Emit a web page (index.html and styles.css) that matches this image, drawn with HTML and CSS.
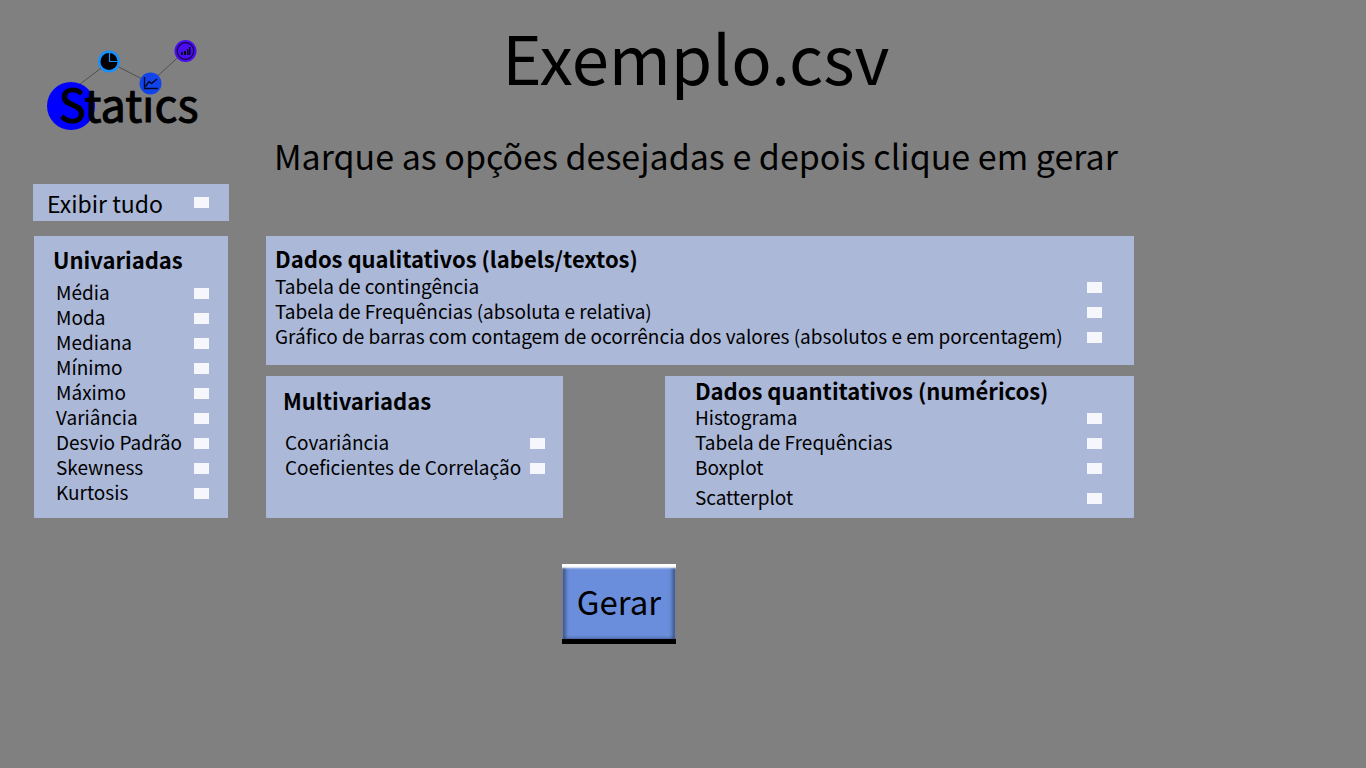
FILE: index.html
```html
<!DOCTYPE html>
<html lang="pt-BR">
<head>
<meta charset="utf-8">
<title>Statics - Exemplo.csv</title>
<meta name="viewport" content="width=device-width, initial-scale=1">
<link rel="stylesheet" href="styles.css">
</head>
<body>
<form class="page">
  <header class="header">
    <svg class="logo" viewBox="0 0 176 100" role="img" aria-label="Statics">
      <path d="M38 57 L76 28 L117 49 L152 17" fill="none" stroke="#505050" stroke-width="1"/>
      <circle cx="38" cy="72" r="24" fill="#0000ff"/>
      <text class="logo-text" x="26" y="88">Statics</text>
      <circle cx="76" cy="27.500" r="11" fill="#1590ff"/>
      <circle cx="76" cy="27.500" r="8.500" fill="#000"/>
      <path d="M76.500 19 V27.500 H84.500" fill="none" stroke="#1590ff" stroke-width="1.200"/>
      <circle cx="117.500" cy="49.500" r="11" fill="#1244ec"/>
      <path d="M111.500 43 V54.500 H125 M112.500 52.500 L116 47.500 L118.500 49.500 L124 45" fill="none" stroke="#020820" stroke-width="1.400"/>
      <circle cx="152.500" cy="17" r="11" fill="#4a0cf0"/>
      <circle cx="152.500" cy="17" r="8.300" fill="none" stroke="#10023c" stroke-width="1.200"/>
      <path d="M148 18 h2 v3 h-2 Z M151 17 h2 v4 h-2 Z M154 15 h1.500 v6 h-1.500 Z M156 13 h1.500 v8 h-1.500 Z" fill="#080018"/>
    </svg>
    <div class="intro">
      <h1 class="title">Exemplo.csv</h1>
      <p class="subtitle">Marque as opções desejadas e depois clique em gerar</p>
    </div>
  </header>
  <main class="content">
    <div class="sidebar">
      <label class="all">Exibir tudo<input class="check" type="checkbox"></label>
      <section class="panel univariate">
        <h2 class="heading">Univariadas</h2>
        <label class="option">Média<input class="check" type="checkbox"></label>
        <label class="option">Moda<input class="check" type="checkbox"></label>
        <label class="option">Mediana<input class="check" type="checkbox"></label>
        <label class="option">Mínimo<input class="check" type="checkbox"></label>
        <label class="option">Máximo<input class="check" type="checkbox"></label>
        <label class="option">Variância<input class="check" type="checkbox"></label>
        <label class="option">Desvio Padrão<input class="check" type="checkbox"></label>
        <label class="option">Skewness<input class="check" type="checkbox"></label>
        <label class="option">Kurtosis<input class="check" type="checkbox"></label>
      </section>
    </div>
    <div class="groups">
      <section class="panel qualitative">
        <h2 class="heading">Dados qualitativos (labels/textos)</h2>
        <label class="option">Tabela de contingência<input class="check" type="checkbox"></label>
        <label class="option">Tabela de Frequências (absoluta e relativa)<input class="check" type="checkbox"></label>
        <label class="option">Gráfico de barras com contagem de ocorrência dos valores (absolutos e em porcentagem)<input class="check" type="checkbox"></label>
      </section>
      <section class="panel multivariate">
        <h2 class="heading">Multivariadas</h2>
        <label class="option">Covariância<input class="check" type="checkbox"></label>
        <label class="option">Coeficientes de Correlação<input class="check" type="checkbox"></label>
      </section>
      <section class="panel quantitative">
        <h2 class="heading">Dados quantitativos (numéricos)</h2>
        <label class="option">Histograma<input class="check" type="checkbox"></label>
        <label class="option">Tabela de Frequências<input class="check" type="checkbox"></label>
        <label class="option">Boxplot<input class="check" type="checkbox"></label>
        <label class="option last">Scatterplot<input class="check" type="checkbox"></label>
      </section>
      <button class="generate" type="button">Gerar</button>
    </div>
  </main>
</form>
</body>
</html>
```
FILE: styles.css
```css
* { box-sizing: border-box; }
body {
  margin: 0;
  min-height: 100vh;
  background: #808080;
  color: #000;
  font-family: "Noto Sans CJK SC", "Noto Sans", sans-serif;
}
h1, h2, p { margin: 0; font-weight: 400; }
.page { padding: 16px 17% 24px 33px; }
.header, .content {
  display: grid;
  grid-template-columns: 196px minmax(0, 1fr);
  column-gap: 37px;
}
.header { height: 168px; }
.logo { width: 176px; height: 100px; margin-top: 18px; }
.logo-text { font-size: 45px; stroke: #000; stroke-width: 1px; }
.intro { text-align: center; padding-right: 8px; }
.title { font-size: 67px; line-height: 80px; white-space: nowrap; }
.subtitle { margin-top: 38px; font-size: 34px; line-height: 44px; white-space: nowrap; }
.sidebar { display: flex; flex-direction: column; gap: 15px; }
.all {
  display: flex;
  align-items: center;
  justify-content: space-between;
  height: 37px;
  padding: 0 20px 0 14px;
  background: #abb8d8;
  font-size: 23px;
  line-height: 32px;
}
.panel { background: #abb8d8; }
.heading { font-size: 22px; line-height: 32px; font-weight: 700; white-space: nowrap; }
.option {
  display: flex;
  align-items: center;
  justify-content: space-between;
  font-size: 19px;
  line-height: 24px;
  height: 25px;
  white-space: nowrap;
}
.check {
  appearance: none;
  flex: none;
  width: 15px;
  height: 11px;
  margin: 0;
  background: #f5f7fc;
}
.option .check { margin-top: 3px; }
.check:checked { background: #1244ec; }
.univariate { margin: 0 1px; padding: 7px 19px 14px 22px; }
.univariate .heading { margin: 0 0 4px -3px; }
.groups {
  display: grid;
  grid-template-columns: 297fr 102px 469fr;
  grid-template-rows: 129px 142px auto;
  row-gap: 11px;
  padding-top: 52px;
}
.qualitative { grid-column: 1 / -1; padding: 7px 32px 17px 9px; }
.qualitative .heading { line-height: 30px; }
.multivariate { grid-column: 1; padding: 8px 18px 20px 19px; }
.multivariate .heading { margin: 0 0 13px -2px; }
.quantitative { grid-column: 3; padding: 0 32px 0 30px; }
.quantitative .heading { line-height: 28px; }
.last { margin-top: 5px; }
.generate {
  grid-column: 2 / 4;
  justify-self: start;
  width: 114px;
  height: 80px;
  margin: 35px 0 0 -1px;
  padding: 0 0 2px;
  border: 0;
  border-bottom: 5px solid #000;
  background: #6b8edc;
  box-shadow: inset 0 4px 2px #fff, inset 4px 0 4px -1px #34466e, inset -4px 0 4px -1px #34466e;
  color: #000;
  font: 33px/44px "Noto Sans CJK SC", "Noto Sans", sans-serif;
}
```
